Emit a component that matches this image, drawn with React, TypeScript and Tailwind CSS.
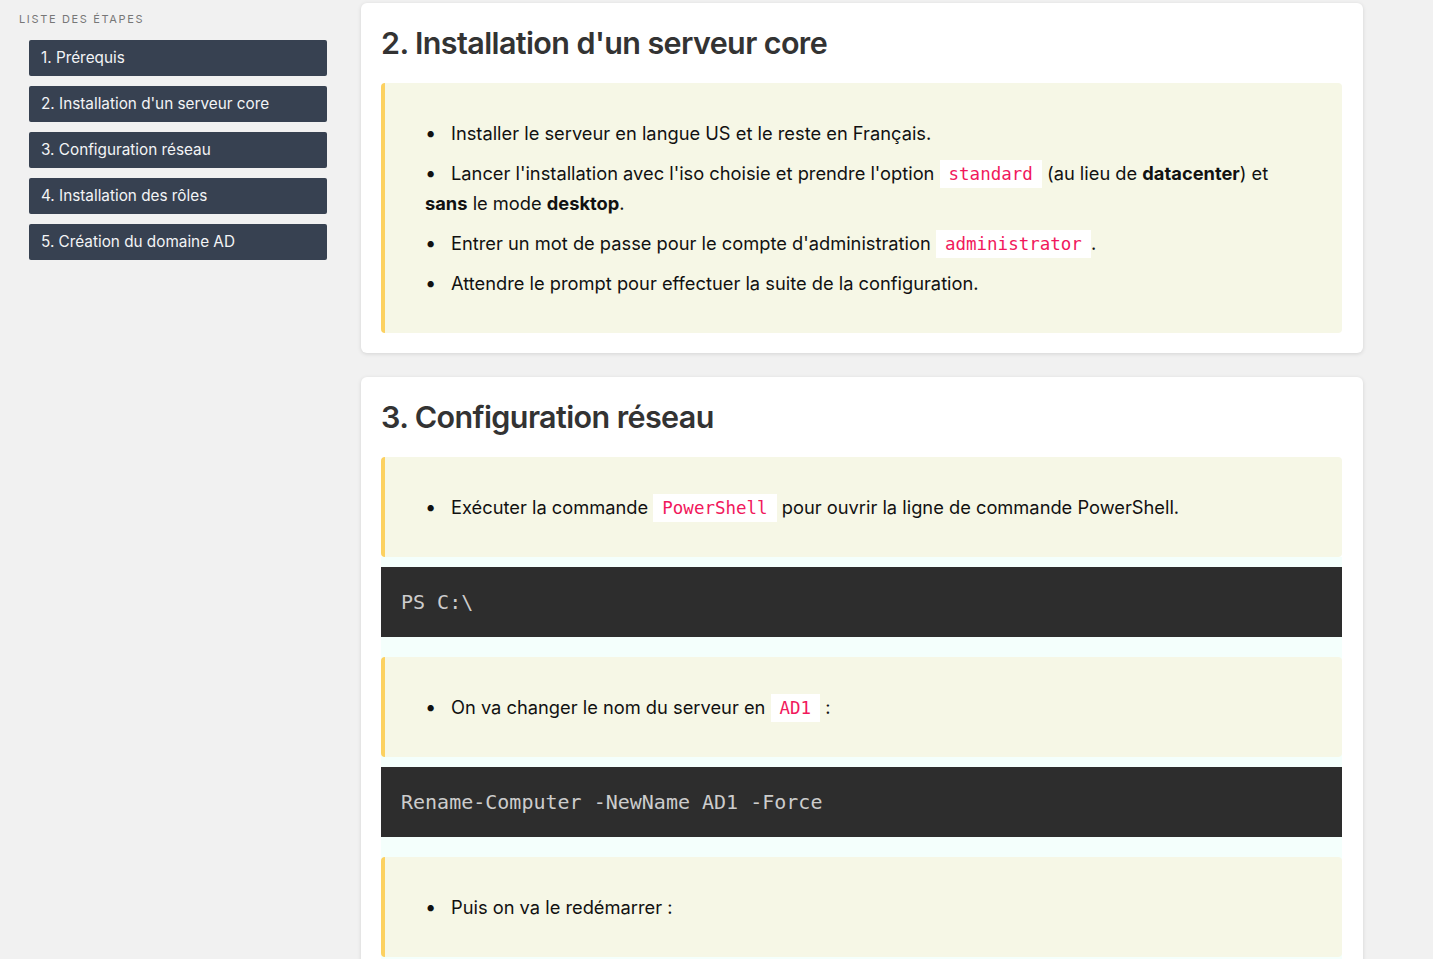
// Étapes d'installation — sidebar + step cards
import React from "react";

const STEPS = [
  "1. Prérequis",
  "2. Installation d'un serveur core",
  "3. Configuration réseau",
  "4. Installation des rôles",
  "5. Création du domaine AD",
];

const sans = "font-['Inter','Noto_Sans',sans-serif]";
const mono = "font-['DejaVu_Sans_Mono','Liberation_Mono',monospace]";

function Code({ children }: { children: React.ReactNode }) {
  return (
    <code
      className={`${mono} inline-block bg-white px-[9px] text-[17.5px] leading-[28px] text-[#f1185c] align-middle -mt-[3px]`}
    >
      {children}
    </code>
  );
}

function Item({ children }: { children: React.ReactNode }) {
  return (
    <li className="leading-[30px]">
      <span className="inline-block w-[26px] text-[20px] leading-[20px]">•</span>
      {children}
    </li>
  );
}

function Callout({ children }: { children: React.ReactNode }) {
  return (
    <div className="rounded-[4px] border-l-4 border-[#fcd160] bg-[#f6f7e6] py-[35px] pl-[40px] pr-[40px]">
      <ul className="flex flex-col gap-[10px] text-[18.3px] text-[#111]">{children}</ul>
    </div>
  );
}

function Pre({ children }: { children: React.ReactNode }) {
  return (
    <pre
      className={`${mono} bg-[#2d2d2d] px-[20px] py-[20px] text-[20px] leading-[30px] text-[#cccccc]`}
    >
      {children}
    </pre>
  );
}

function Card({ title, children }: { title: string; children: React.ReactNode }) {
  return (
    <section className="rounded-[6px] bg-white pt-[20px] pb-[20px] pl-[20px] pr-[21px] shadow-[0_1px_4px_rgba(0,0,0,0.12)]">
      <h2 className="mb-[20px] text-[30.5px] font-semibold leading-[40px] tracking-[-0.02em] text-[#333]">
        {title}
      </h2>
      {children}
    </section>
  );
}

export default function App() {
  return (
    <div className={`${sans} flex min-h-screen bg-[#f1f1f1]`}>
      {/* Sidebar */}
      <aside className="w-[361px] shrink-0">
        <div className="pl-[19px] pt-[12px] text-[11px] leading-[14px] tracking-[0.15em] text-[#777]">
          LISTE DES ÉTAPES
        </div>
        <nav className="mt-[14px] flex flex-col gap-[10px] pl-[29px]">
          {STEPS.map((s) => (
            <a
              key={s}
              className="flex h-[36px] w-[298px] items-center rounded-[2px] bg-[#374151] px-[12px] text-[15.3px] text-[#f3f4f6]"
            >
              {s}
            </a>
          ))}
        </nav>
      </aside>

      {/* Main */}
      <main className="flex w-[1002px] flex-col gap-[24px] pt-[3px]">
        <Card title="2. Installation d'un serveur core">
          <Callout>
            <Item>Installer le serveur en langue US et le reste en Français.</Item>
            <Item>
              Lancer l'installation avec l'iso choisie et prendre l'option <Code>standard</Code> (au
              lieu de <b>datacenter</b>) et <b>sans</b> le mode <b>desktop</b>.
            </Item>
            <Item>
              Entrer un mot de passe pour le compte d'administration <Code>administrator</Code>.
            </Item>
            <Item>Attendre le prompt pour effectuer la suite de la configuration.</Item>
          </Callout>
        </Card>

        <Card title="3. Configuration réseau">
          <Callout>
            <Item>
              Exécuter la commande <Code>PowerShell</Code> pour ouvrir la ligne de commande
              PowerShell.
            </Item>
          </Callout>
          <div className="bg-[#f4fffc] pb-[20px]">
            <div className="pt-[10px] pb-[20px]">
              <Pre>PS C:\</Pre>
            </div>
            <Callout>
              <Item>
                On va changer le nom du serveur en <Code>AD1</Code> :
              </Item>
            </Callout>
            <div className="pt-[10px] pb-[20px]">
              <Pre>Rename-Computer -NewName AD1 -Force</Pre>
            </div>
            <Callout>
              <Item>Puis on va le redémarrer :</Item>
            </Callout>
          </div>
        </Card>
      </main>
    </div>
  );
}
